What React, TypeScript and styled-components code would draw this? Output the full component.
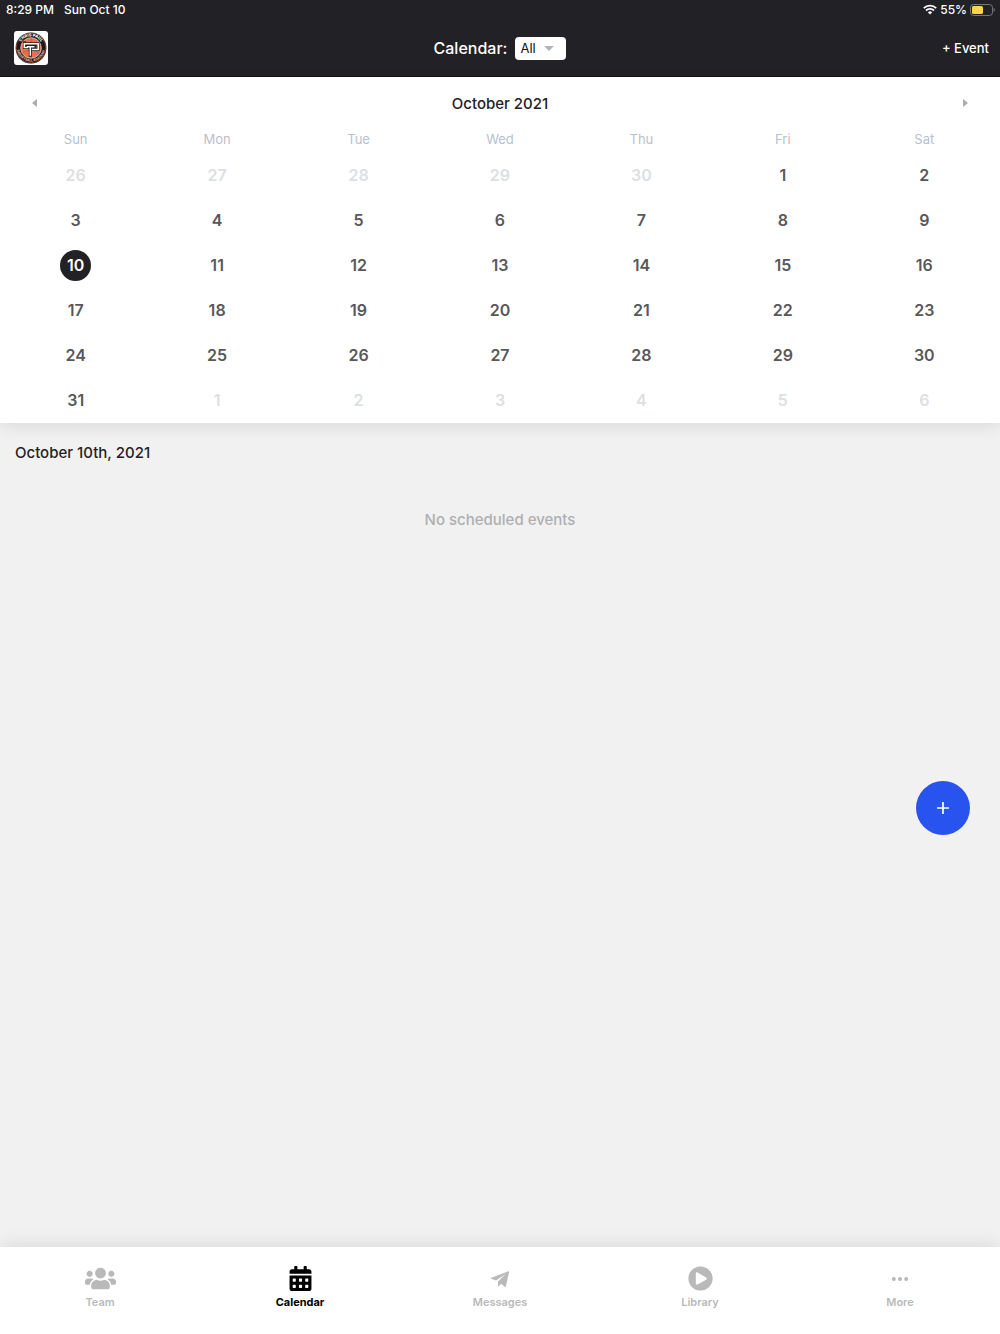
import React, { useState } from 'react';
import styled, { createGlobalStyle } from 'styled-components';
import { FaUsers, FaCalendarAlt, FaPlayCircle } from 'react-icons/fa';

const GlobalStyle = createGlobalStyle`
  *, *::before, *::after { box-sizing: border-box; }
  body {
    margin: 0;
    background: #f1f1f1;
    color: #222126;
    font-family: Inter, "Liberation Sans", sans-serif;
    font-size: 16px;
  }
  button, select { font: inherit; color: inherit; }
  button { border: 0; padding: 0; background: none; cursor: pointer; }
`;

const Screen = styled.div`
  min-height: 100vh;
  display: flex;
  flex-direction: column;
`;

const TopArea = styled.header`
  background: #222126;
  color: #fff;
  border-bottom: 1px solid #131216;
`;

const StatusBar = styled.div`
  display: flex;
  align-items: flex-start;
  justify-content: space-between;
  height: 20px;
  padding: 0 5px 0 6px;
  font-size: 12px;
  font-weight: 500;
  line-height: 20px;
`;

const StatusGroup = styled.div<{ $gap: number }>`
  display: flex;
  align-items: center;
  gap: ${(p) => p.$gap}px;
  height: 19px;
`;

const TitleBar = styled.div`
  display: grid;
  grid-template-columns: 1fr auto 1fr;
  align-items: center;
  height: 56px;
  padding: 0 11px;
`;

const Logo = styled.svg`
  display: block;
  width: 34px;
  height: 34px;
  margin-left: 3px;
`;

const Filter = styled.div`
  display: flex;
  align-items: center;
  gap: 8px;
`;

const FilterLabel = styled.label`
  font-size: 16px;
  font-weight: 500;
`;

const SelectBox = styled.div`
  display: grid;
  align-items: center;
  width: 51px;
  height: 23px;
  border-radius: 4px;
  background: #fff;
  color: #111;

  > * { grid-area: 1 / 1; }
`;

const Select = styled.select`
  appearance: none;
  width: 100%;
  height: 100%;
  border: 0;
  padding: 0 5px;
  background: transparent;
  font-size: 13px;
`;

const SelectArrow = styled.svg`
  justify-self: end;
  margin-right: 12px;
  pointer-events: none;
`;

const AddEvent = styled.button`
  justify-self: end;
  font-size: 13px;
  font-weight: 500;
`;

const CalendarPanel = styled.section`
  position: relative;
  background: #fff;
  padding: 0 5px;
  box-shadow: 0 4px 16px rgba(0, 0, 0, 0.09);
`;

const MonthBar = styled.div`
  display: flex;
  align-items: center;
  justify-content: space-between;
  height: 52px;
  padding: 0 19px;
`;

const MonthTitle = styled.h1`
  margin: 0;
  font-size: 15px;
  font-weight: 500;
`;

const ArrowButton = styled.button`
  display: grid;
  place-items: center;
  width: 20px;
  height: 20px;
`;

const MonthTable = styled.table`
  width: 100%;
  table-layout: fixed;
  border-collapse: collapse;
`;

const WeekdayCell = styled.th`
  height: 24px;
  padding: 0;
  color: #b6c1cd;
  font-size: 13px;
  font-weight: 400;
  line-height: 20px;
  vertical-align: top;
`;

const DayCell = styled.td`
  height: 45px;
  padding: 0;
  text-align: center;
`;

const Day = styled.button<{ $muted: boolean; $selected: boolean }>`
  display: block;
  width: 31px;
  height: 31px;
  margin: 0 auto;
  border-radius: 50%;
  background: ${(p) => (p.$selected ? '#222126' : 'transparent')};
  color: ${(p) => (p.$selected ? '#fff' : p.$muted ? '#dce0e3' : '#58585b')};
  font-size: 16px;
  font-weight: 600;
  line-height: 31px;
`;

const Agenda = styled.main`
  position: relative;
  flex: 1;
  padding: 20px 15px;
`;

const AgendaTitle = styled.h2`
  margin: 0;
  font-size: 15px;
  font-weight: 500;
  line-height: 20px;
`;

const EmptyNote = styled.p`
  margin: 47px 0 0;
  color: #afafb1;
  font-size: 15px;
  font-weight: 500;
  line-height: 20px;
  text-align: center;
`;

const FloatingAdd = styled.button`
  position: absolute;
  right: 30px;
  bottom: 412px;
  display: grid;
  place-items: center;
  width: 54px;
  height: 54px;
  border-radius: 50%;
  background: #2853ee;
`;

const TabBar = styled.nav`
  position: relative;
  display: grid;
  grid-template-columns: repeat(5, 1fr);
  height: 87px;
  padding-top: 19px;
  background: #fff;
  box-shadow: 0 -3px 16px rgba(0, 0, 0, 0.09);
`;

const Tab = styled.a<{ $active: boolean }>`
  display: flex;
  flex-direction: column;
  align-items: center;
  gap: 3px;
  color: ${(p) => (p.$active ? '#000' : '#b9b9b9')};
  font-size: 11px;
  font-weight: ${(p) => (p.$active ? 700 : 600)};
  line-height: 16px;
  text-decoration: none;
`;

const TabIcon = styled.span`
  display: grid;
  place-content: center;
  height: 25px;
`;

const WifiIcon = () => (
  <svg width="14" height="11" viewBox="0 0 14 11" fill="none" stroke="#fff" strokeWidth="1.8" aria-hidden="true">
    <path d="M.8 4.1a8.9 8.9 0 0 1 12.4 0" />
    <path d="M3 6.5a5.7 5.7 0 0 1 8 0" />
    <path d="M7 10.6 4.9 8.4a3 3 0 0 1 4.2 0Z" fill="#fff" stroke="none" />
  </svg>
);

const BatteryIcon = () => (
  <svg width="25" height="12" viewBox="0 0 25 12" aria-hidden="true">
    <rect x=".5" y=".5" width="22" height="11" rx="3" fill="none" stroke="#77767a" />
    <rect x="2" y="2" width="11" height="8" rx="1.6" fill="#fbd44b" />
    <path d="M23.6 4.1v3.8c.8-.3 1.2-1 1.2-1.9s-.4-1.6-1.2-1.9z" fill="#77767a" />
  </svg>
);

const TeamLogo = () => (
  <Logo viewBox="0 0 34 34" role="img" aria-label="Team logo">
    <defs>
      <path id="ring-top" d="M5.4 17a11.6 11.6 0 0 1 23.2 0" />
      <path id="ring-bottom" d="M2.8 14.5a14.3 14.3 0 1 0 28.4 0" />
    </defs>
    <rect width="34" height="34" rx="3" fill="#fff" />
    <circle cx="17" cy="17" r="15.4" fill="#1c1718" />
    <circle cx="17" cy="17" r="14.9" fill="none" stroke="#d9694b" strokeWidth=".5" />
    <circle cx="17" cy="17" r="10.3" fill="#e4714f" stroke="#f3d9cf" strokeWidth=".7" />
    <path d="M8.5 11.5C14 16 20 16 25.5 11.5M8.5 22.5C14 18 20 18 25.5 22.5M17 7v20" fill="none" stroke="#a34932" strokeWidth=".5" />
    <g fill="#fff" fontFamily="Inter, sans-serif" fontWeight="800" fontSize="4">
      <text textAnchor="middle"><textPath href="#ring-top" startOffset="50%">CHRIS PAUL</textPath></text>
      <text textAnchor="middle" fontSize="3.2" fill="#f0b9a6"><textPath href="#ring-bottom" startOffset="50%">BASKETBALL ACADEMY</textPath></text>
    </g>
    <g fill="none">
      <path d="M10.500 12.800h13.500v5.700h-6.300M10.500 12v4.500h3.500M13 15.700h7.500M16.300 15v9.200" stroke="#241b1b" strokeWidth="3" strokeLinecap="square" />
      <path d="M9.500 12.800h14.700v5.700h-6.300M10.300 12v4.500h3.700M13 15.700h7.500M16.300 15v9.700" stroke="#fff" strokeWidth="1.500" />
    </g>
  </Logo>
);

const PlaneIcon = () => (
  <svg width="20" height="20" viewBox="0 0 20 20" fill="currentColor" aria-hidden="true">
    <path d="M18.5 2.3.8 9.1c-.3.1-.3.4 0 .5l5.3 1.9L16 4.7 8 12.6v5.2l3.1-3 4 3.2c.3.2.6.1.7-.3L19.1 2.7c.1-.3-.2-.5-.6-.4z" />
  </svg>
);

const DotsIcon = () => (
  <svg width="18" height="18" viewBox="0 0 18 18" fill="currentColor" aria-hidden="true">
    <circle cx="2.8" cy="9" r="2" />
    <circle cx="9" cy="9" r="2" />
    <circle cx="15.2" cy="9" r="2" />
  </svg>
);

const weekdays = ['Sun', 'Mon', 'Tue', 'Wed', 'Thu', 'Fri', 'Sat'];

// October 2021 begins on a Friday, so the grid opens on September 26.
const firstCell = new Date(2021, 8, 26);
const weeks = Array.from({ length: 6 }, (_, week) =>
  Array.from({ length: 7 }, (_, day) => {
    const date = new Date(firstCell);
    date.setDate(firstCell.getDate() + week * 7 + day);
    return { day: date.getDate(), month: date.getMonth() };
  }),
);

const tabs = [
  { name: 'Team', icon: <FaUsers size={31} /> },
  { name: 'Calendar', icon: <FaCalendarAlt size={25} /> },
  { name: 'Messages', icon: <PlaneIcon /> },
  { name: 'Library', icon: <FaPlayCircle size={25} /> },
  { name: 'More', icon: <DotsIcon /> },
];

export default function App() {
  const [selected, setSelected] = useState(10);

  return (
    <Screen>
      <GlobalStyle />
      <TopArea>
        <StatusBar>
          <StatusGroup $gap={10}>
            <span>8:29 PM</span>
            <span>Sun Oct 10</span>
          </StatusGroup>
          <StatusGroup $gap={3}>
            <WifiIcon />
            <span>55%</span>
            <BatteryIcon />
          </StatusGroup>
        </StatusBar>
        <TitleBar>
          <TeamLogo />
          <Filter>
            <FilterLabel htmlFor="calendar-filter">Calendar:</FilterLabel>
            <SelectBox>
              <Select id="calendar-filter">
                <option>All</option>
              </Select>
              <SelectArrow width="10" height="5" viewBox="0 0 10 5" aria-hidden="true">
                <path d="M0 0h10L5 5z" fill="#b0b5bb" />
              </SelectArrow>
            </SelectBox>
          </Filter>
          <AddEvent type="button">+ Event</AddEvent>
        </TitleBar>
      </TopArea>

      <CalendarPanel>
        <MonthBar>
          <ArrowButton type="button" aria-label="Previous month">
            <svg width="5" height="8" viewBox="0 0 5 8" aria-hidden="true">
              <path d="M5 0v8L0 4z" fill="#a9adb1" />
            </svg>
          </ArrowButton>
          <MonthTitle>October 2021</MonthTitle>
          <ArrowButton type="button" aria-label="Next month">
            <svg width="5" height="8" viewBox="0 0 5 8" aria-hidden="true">
              <path d="M0 0v8l5-4z" fill="#a9adb1" />
            </svg>
          </ArrowButton>
        </MonthBar>
        <MonthTable>
          <thead>
            <tr>
              {weekdays.map((name) => (
                <WeekdayCell key={name} scope="col">{name}</WeekdayCell>
              ))}
            </tr>
          </thead>
          <tbody>
            {weeks.map((week, row) => (
              <tr key={row}>
                {week.map(({ day, month }) => (
                  <DayCell key={`${month}-${day}`}>
                    <Day
                      type="button"
                      $muted={month !== 9}
                      $selected={month === 9 && day === selected}
                      onClick={() => month === 9 && setSelected(day)}
                    >
                      {day}
                    </Day>
                  </DayCell>
                ))}
              </tr>
            ))}
          </tbody>
        </MonthTable>
      </CalendarPanel>

      <Agenda>
        <AgendaTitle>October 10th, 2021</AgendaTitle>
        <EmptyNote>No scheduled events</EmptyNote>
        <FloatingAdd type="button" aria-label="Add event">
          <svg width="12" height="12" viewBox="0 0 12 12" stroke="#fff" strokeWidth="1.7" aria-hidden="true">
            <path d="M6 0v12M0 6h12" />
          </svg>
        </FloatingAdd>
      </Agenda>

      <TabBar>
        {tabs.map(({ name, icon }) => (
          <Tab key={name} href={`#${name.toLowerCase()}`} $active={name === 'Calendar'}>
            <TabIcon>{icon}</TabIcon>
            {name}
          </Tab>
        ))}
      </TabBar>
    </Screen>
  );
}
